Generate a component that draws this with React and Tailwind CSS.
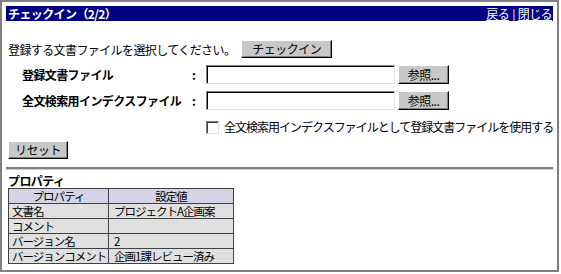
export default function App() {
  const font = { fontFamily: '"MS UI Gothic","Noto Sans CJK JP",sans-serif' };
  const btn =
    "shrink-0 h-[18px] bg-[#c8c8c8] border border-t-white border-l-white border-r-black border-b-black shadow-[inset_-1px_-1px_#808080] text-[12px] leading-[14px] text-black flex items-center justify-center tracking-[-0.5px]";
  const input =
    "shrink-0 h-[19px] w-[189px] bg-white border border-t-[#808080] border-l-[#808080] border-r-[#e0e0e0] border-b-[#e0e0e0] shadow-[inset_1px_1px_#000]";
  const rows = [
    ["文書名", "プロジェクトA企画案"],
    ["コメント", ""],
    ["バージョン名", "2"],
    ["バージョンコメント", "企画1課レビュー済み"],
  ];
  return (
    <div
      className="w-[559px] h-[272px] border-2 border-[#808080] bg-white p-[4px] text-[12px] text-black tracking-[-0.6px]"
      style={font}
    >
      <div className="h-[15px] w-[547px] bg-[#000080] flex items-center justify-between pl-[2px] pr-[1px] text-white">
        <span className="font-bold text-[12px] leading-[14px]">チェックイン（2/2）</span>
        <span className="text-[12px] leading-[14px] flex items-center gap-[3px]">
          <span className="underline">戻る</span>
          <span>|</span>
          <span className="underline">閉じる</span>
        </span>
      </div>

      <div className="pl-[2px]">
        <div className="mt-[19px] h-[18px] flex items-center">
          <span className="leading-[14px] mt-[2px]">登録する文書ファイルを選択してください。</span>
          <button className={btn + " w-[91px] ml-[6px]"}>チェックイン</button>
        </div>

        <div className="mt-[7px] h-[19px] flex items-center">
          <span className="shrink-0 w-[184px] pl-[14px] font-bold leading-[14px] whitespace-nowrap">登録文書ファイル</span>
          <span className="shrink-0 w-[14px] font-bold">:</span>
          <div className={input} />
          <button className={btn + " w-[51px] h-[19px] ml-[3px]"}>参照...</button>
        </div>

        <div className="mt-[7px] h-[19px] flex items-center">
          <span className="shrink-0 w-[184px] pl-[14px] font-bold leading-[14px] whitespace-nowrap">全文検索用インデクスファイル</span>
          <span className="shrink-0 w-[14px] font-bold">:</span>
          <div className={input} />
          <button className={btn + " w-[51px] h-[19px] ml-[3px]"}>参照...</button>
        </div>

        <div className="mt-[9px] h-[16px] flex items-center pl-[198px]">
          <span className="shrink-0 w-[13px] h-[13px] border border-t-[#808080] border-l-[#808080] border-r-[#e0e0e0] border-b-[#e0e0e0] shadow-[inset_1px_1px_#404040] bg-white" />
          <span className="ml-[5px] leading-[14px] whitespace-nowrap tracking-[-1px]">全文検索用インデクスファイルとして登録文書ファイルを使用する</span>
        </div>

        <button className={btn + " w-[60px] mt-[6px]"}>リセット</button>
      </div>

      <div className="mt-[8px] w-[547px] h-[3px] border-t-2 border-t-[#808080] border-b border-b-[#c8c8c8]" />

      <div className="pl-[2px]">
        <div className="mt-[4px] font-bold leading-[14px] h-[14px]">プロパティ</div>
        <table className="table-fixed border-collapse w-[226px] text-[11.5px] leading-[14px] tracking-[-1px]">
          <thead>
            <tr className="h-[15px]">
              <th className="w-[100px] border border-[#404040] bg-[#d4d4e6] font-normal text-center p-0">プロパティ</th>
              <th className="border border-[#404040] bg-[#d4d4e6] font-normal text-center p-0">設定値</th>
            </tr>
          </thead>
          <tbody>
            {rows.map(([k, v]) => (
              <tr key={k} className="h-[15px]">
                <td className="border border-[#404040] bg-[#e0e0e0] p-0 pl-[3px] whitespace-nowrap overflow-hidden">{k}</td>
                <td className="border border-[#404040] bg-[#e0e0e0] p-0 pl-[5px] whitespace-nowrap overflow-hidden">{v}</td>
              </tr>
            ))}
          </tbody>
        </table>
      </div>
    </div>
  );
}
